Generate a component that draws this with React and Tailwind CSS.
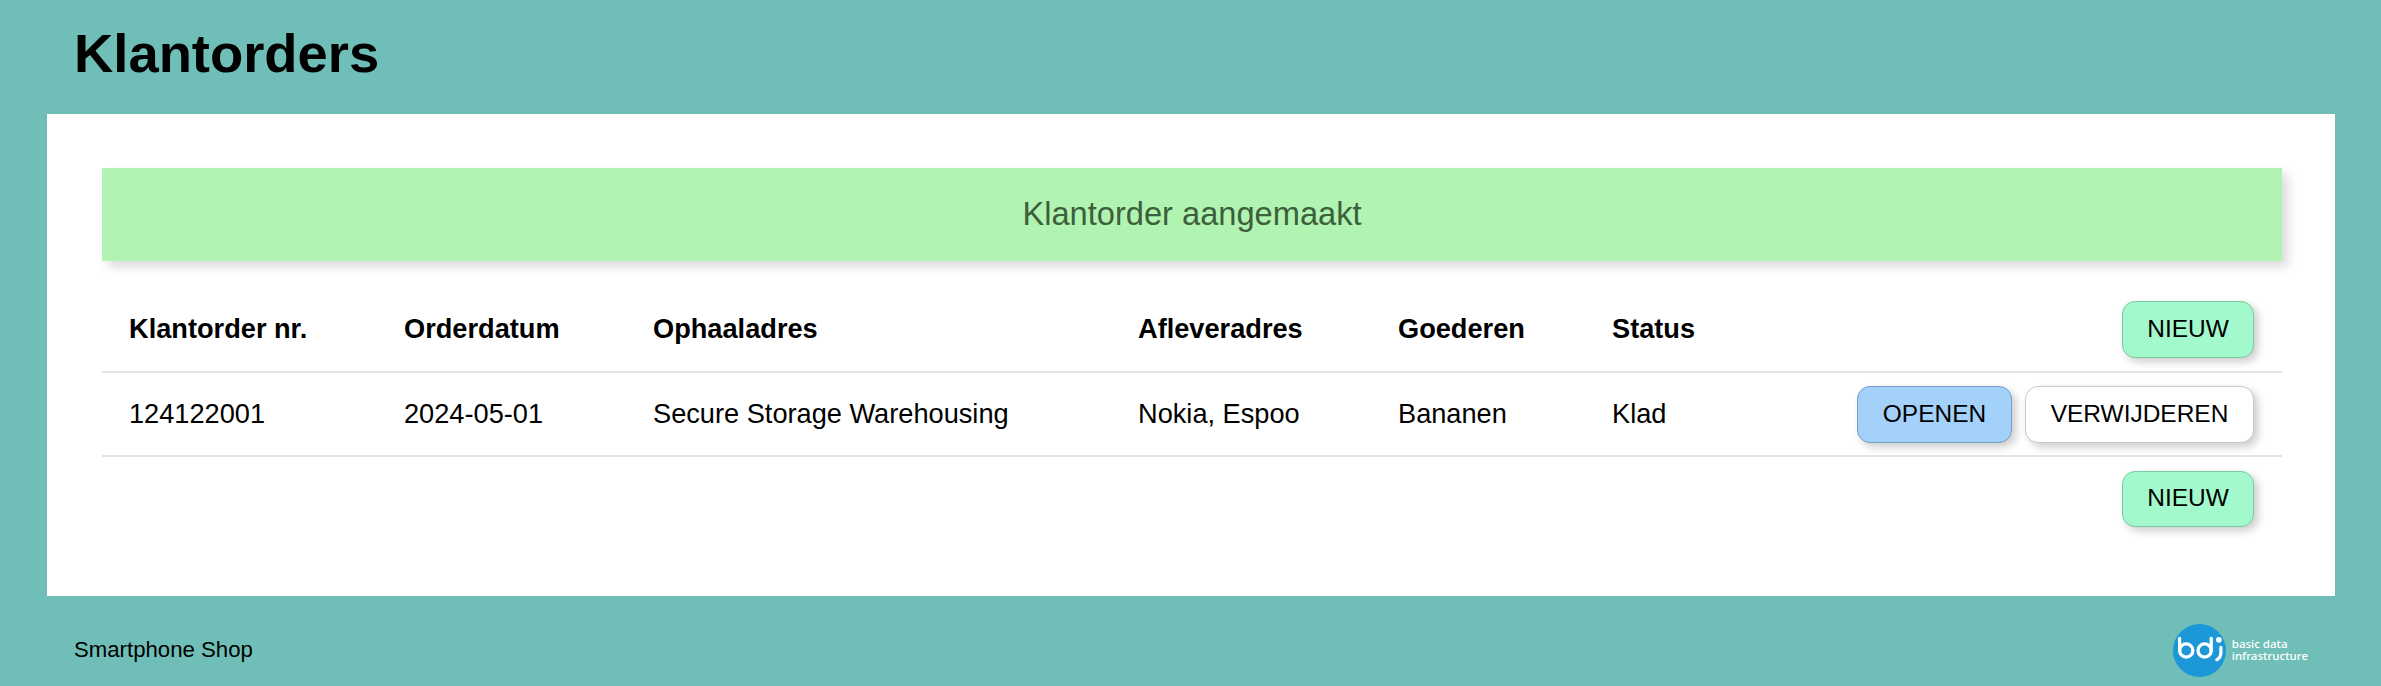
const Btn = ({ className, children }) => (
  <button className={`rounded-[13px] border text-[24.48px] font-normal leading-none text-black shadow-[4px_4px_8px_rgba(0,0,0,0.2)] ${className}`}>{children}</button>
);
const New = ({ className = "h-[57px]" }) => <Btn className={`w-[132px] bg-[#a2f9cc] border-[#7cc9a0] ${className}`}>NIEUW</Btn>;
const Th = ({ children }) => <th className="p-0 pl-[27px] text-left text-[27.2px] font-bold">{children}</th>;
const Td = ({ children }) => <td className="p-0 pl-[27px] text-[27.2px] font-normal">{children}</td>;

const Logo = () => (
  <div className="flex items-center gap-[6px]">
    <svg width="53" height="53" viewBox="0 0 52 52">
      <circle cx="26" cy="26" r="26" fill="#1c97d8" />
      <g fill="none" stroke="#fff" strokeWidth="3.2" strokeLinecap="round">
        <path d="M6.5 14v12" />
        <circle cx="13" cy="26" r="6.5" />
        <circle cx="31" cy="26" r="6.5" />
        <path d="M37.5 14v12" />
        <path d="M47 23v5q0 5-4 7" />
      </g>
      <circle cx="45" cy="15.5" r="2.8" fill="#fff" />
    </svg>
    <div className="font-['Noto_Sans',sans-serif] text-[11.5px] font-medium leading-[12.5px] text-white">
      <div>basic data</div>
      <div>infrastructure</div>
    </div>
  </div>
);

export default function App() {
  return (
    <div className="h-[686px] w-[2381px] overflow-hidden bg-[#6fbfb8] font-['Liberation_Sans',Arial,sans-serif] text-black">
      <header className="flex h-[114px] items-center pb-[6px] pl-[74px]">
        <h1 className="text-[54.4px] font-bold leading-none">Klantorders</h1>
      </header>
      <main className="ml-[47px] h-[482px] w-[2288px] bg-white pb-[54px] pl-[55px] pr-[53px] pt-[54px]">
        <div className="flex h-[93px] items-center justify-center bg-[#b1f4b1] pb-[1px] text-[32.64px] text-[#3c5f3c] shadow-[6px_6px_10px_rgba(0,0,0,0.14)]">
          Klantorder aangemaakt
        </div>
        <table className="mt-[27px] w-full table-fixed border-collapse">
          <colgroup>
            <col className="w-[275px]" />
            <col className="w-[249px]" />
            <col className="w-[485px]" />
            <col className="w-[260px]" />
            <col className="w-[214px]" />
            <col className="w-[200px]" />
            <col />
          </colgroup>
          <thead>
            <tr className="h-[84px] border-b-2 border-[#e4e4e4]">
              <Th>Klantorder nr.</Th>
              <Th>Orderdatum</Th>
              <Th>Ophaaladres</Th>
              <Th>Afleveradres</Th>
              <Th>Goederen</Th>
              <Th>Status</Th>
              <th className="p-0 pr-[28px] text-right font-normal"><New /></th>
            </tr>
          </thead>
          <tbody>
            <tr className="h-[84px] border-b-2 border-[#e4e4e4]">
              <Td>124122001</Td>
              <Td>2024-05-01</Td>
              <Td>Secure Storage Warehousing</Td>
              <Td>Nokia, Espoo</Td>
              <Td>Bananen</Td>
              <Td>Klad</Td>
              <td className="p-0 pr-[28px]">
                <div className="flex justify-end gap-[13px]">
                  <Btn className="h-[57px] w-[155px] bg-[#a3d1f9] border-[#72a0c9]">OPENEN</Btn>
                  <Btn className="h-[57px] w-[229px] bg-white border-[#c8c8c8]">VERWIJDEREN</Btn>
                </div>
              </td>
            </tr>
            <tr className="h-[84px]">
              <td colSpan={7} className="p-0 pr-[28px] text-right"><New className="h-[56px]" /></td>
            </tr>
          </tbody>
        </table>
      </main>
      <footer className="flex h-[90px] items-center justify-between pl-[74px] pr-[73px] pt-[18px]">
        <span className="text-[22.2px]">Smartphone Shop</span>
        <Logo />
      </footer>
    </div>
  );
}
